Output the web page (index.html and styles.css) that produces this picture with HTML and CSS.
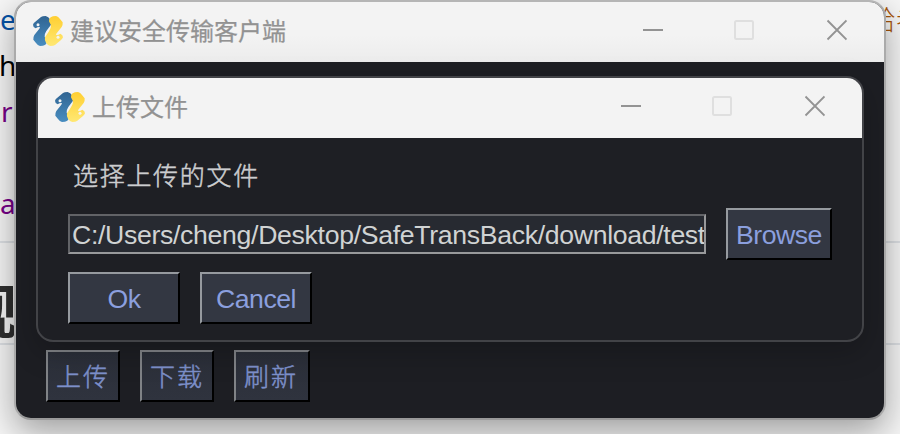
FILE: index.html
```html
<!DOCTYPE html>
<html lang="zh-CN">
<head>
<meta charset="utf-8">
<title>建议安全传输客户端</title>
<link rel="stylesheet" href="styles.css">
</head>
<body>
<svg width="0" height="0" class="defs">
  <defs>
    <linearGradient id="blue" x1="0" y1="0" x2="0" y2="1"><stop offset="0" stop-color="#306492"/><stop offset="1" stop-color="#488dc0"/></linearGradient>
    <linearGradient id="yellow" x1="0" y1="1" x2="0" y2="0"><stop offset="0" stop-color="#ffcf32"/><stop offset="1" stop-color="#ffe873"/></linearGradient>
    <symbol id="logo" viewBox="0 0 90 90">
      <path fill="url(#blue)" d="M24 3Q28 0 38 0Q47 3 51 10Q56 17 54 26L40 45Q34 54 35 62L41 74Q43 81 37 86Q31 90 21 90Q14 88 9 81L1 71Q0 64 4 57L19 38Q22 34 20 33Q15 32 8 37Q0 34 0 26Q1 22 6 18Z"/>
      <path fill="url(#yellow)" transform="rotate(180 45 45)" d="M24 3Q28 0 38 0Q47 3 51 10Q56 17 54 26L43 43Q35 54 36 62L42 74Q43 81 37 86Q31 90 21 90Q14 88 9 81L1 71Q0 64 4 57L19 38Q22 34 20 33Q15 32 8 37Q0 34 0 26Q1 22 6 18Z"/>
      <circle cx="15" cy="26" r="4.5" fill="#f3f3f3"/><circle cx="75" cy="64" r="4.5" fill="#f3f3f3"/>
    </symbol>
    <symbol id="controls" viewBox="0 0 204 22">
      <g fill="none" stroke="#939393" stroke-width="2">
        <path d="M0 11H20"/>
        <rect x="92" y="2" width="18" height="18" rx="1.5" stroke="#dfdfdf"/>
        <path d="M184.5 1.5L203.5 20.5M203.5 1.5L184.5 20.5" stroke-width="1.9"/>
      </g>
    </symbol>
  </defs>
</svg>
<div class="page">
  <span class="code c1">e</span>
  <span class="code c2">h</span>
  <span class="code c3">r</span>
  <span class="code c4">a</span>
  <span class="heading">观</span>
  <span class="note">给者</span>
  <div class="rule r1"></div>
  <div class="rule r2"></div>

  <main class="window main">
    <header class="titlebar">
      <svg class="logo"><use href="#logo"/></svg>
      <span class="title">建议安全传输客户端</span>
      <svg class="controls"><use href="#controls"/></svg>
    </header>
    <div class="toolbar">
      <button class="btn cjk">上传</button>
      <button class="btn cjk">下载</button>
      <button class="btn cjk wide">刷新</button>
    </div>
  </main>

  <section class="window dialog">
    <header class="titlebar">
      <svg class="logo"><use href="#logo"/></svg>
      <span class="title">上传文件</span>
      <svg class="controls"><use href="#controls"/></svg>
    </header>
    <div class="form">
      <div class="label">选择上传的文件</div>
      <div class="row">
        <div class="field"><span>C:/Users/cheng/Desktop/SafeTransBack/download/test</span></div>
        <button class="btn browse">Browse</button>
      </div>
      <div class="row actions">
        <button class="btn">Ok</button>
        <button class="btn">Cancel</button>
      </div>
    </div>
  </section>
</div>
</body>
</html>
```
FILE: styles.css
```css
* { box-sizing: border-box; }
body { margin: 0; overflow: hidden; }
.defs { position: absolute; }
.page {
  position: relative;
  width: 900px;
  height: 434px;
  overflow: hidden;
  background: #f6f6f6;
  font-family: "Liberation Sans", "Noto Sans CJK SC", sans-serif;
}
.code, .heading, .note { position: absolute; white-space: nowrap; }
.code { left: 0; font: 28px/32px "Noto Sans", sans-serif; }
.c1 { top: 3px; color: #0451a5; }
.c2 { top: 49px; left: -1px; color: #000; }
.c3 { top: 95px; left: 1px; color: #770088; }
.c4 { top: 187px; color: #770088; }
.heading { left: -41px; top: 268px; font: bold 58px/80px "Noto Sans CJK SC", sans-serif; color: #303030; }
.note { left: 869px; top: 1px; font: 300 27px/36px "Noto Sans CJK SC", sans-serif; color: #a85508; }
.rule { position: absolute; left: 0; width: 100%; height: 2px; background: #dde0e4; }
.r1 { top: 241px; }
.r2 { top: 343px; }

.window { position: absolute; border: 2px solid; overflow: hidden; background: #1d1e23; }
.main {
  left: 14px; top: 0; width: 872px; height: 420px;
  display: flex; flex-direction: column;
  border-color: #b5b5b5 #aaa #999;
  border-radius: 17px;
  box-shadow: 0 12px 34px rgba(0,0,0,.36);
}
.dialog {
  left: 36px; top: 76px; width: 828px; height: 266px;
  border-color: #424347;
  border-radius: 17px;
  background: #1e1f24;
  box-shadow: 0 10px 30px rgba(0,0,0,.22);
}
.titlebar {
  display: flex; align-items: center;
  height: 60px;
  padding: 0 37px 2px 17px;
  background: #f3f3f3;
}
.main > .titlebar { background: linear-gradient(#f3f3f3 55%, #ececec); }
.logo { width: 30px; height: 30px; flex: none; }
.title {
  margin: -3px 0 0 7px;
  font: 24px/36px "Noto Sans CJK SC", sans-serif;
  color: #929292;
  -webkit-text-stroke: .25px #929292;
}
.controls { width: 204px; height: 22px; margin: -2px 0 0 auto; flex: none; }
.toolbar { display: flex; gap: 20px; margin-top: auto; padding: 0 0 16px 30px; }
.btn {
  width: 112px; height: 52px;
  margin: 0; padding: 2px 0 0;
  border: 2px solid;
  border-color: #969a9f #000 #000 #969a9f;
  border-radius: 0;
  background: #333742;
  color: #8b9fde;
  font: 26.67px/46px "Liberation Sans", sans-serif;
  letter-spacing: -.5px;
  white-space: nowrap;
}
.btn.cjk {
  width: 74px;
  padding: 0 0 2px;
  border-color: #808387 #000 #000 #808387;
  background: linear-gradient(#2b2f39, #2f333e);
  color: #7d90ca;
  font: 300 25px/46px "Noto Sans CJK SC", sans-serif;
  letter-spacing: 2px;
  -webkit-text-stroke: .5px #7d90ca;
}
.btn.cjk.wide { width: 76px; padding-right: 2px; }
.btn.browse { width: 106px; }
.form { padding: 20px 30px; }
.label {
  padding-left: 5px;
  height: 50px;
  font: 300 25px/32px "Noto Sans CJK SC", sans-serif;
  letter-spacing: 1.7px;
  color: #cccdcf;
  -webkit-text-stroke: .5px #cccdcf;
}
.row { display: flex; align-items: center; gap: 20px; }
.field {
  width: 638px; height: 40px;
  border: 2px solid;
  border-color: #626367 #98999b #98999b #626367;
  background: #272a31;
  color: #d0d3d3;
  padding-left: 2px;
  font-size: 26.67px; line-height: 38px;
  letter-spacing: -.33px;
  white-space: nowrap;
  overflow: hidden;
}
.actions { margin-top: 12px; }
```
